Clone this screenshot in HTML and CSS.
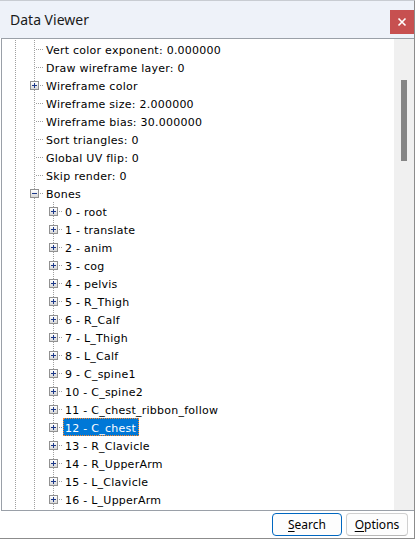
FILE: index.html
```html
<!DOCTYPE html>
<html>
<head>
<meta charset="utf-8">
<link rel="stylesheet" href="styles.css">
</head>
<body>
<div class="window">
  <div class="titlebar">
    <span class="title">Data Viewer</span>
    <button class="close" aria-label="Close"><svg width="10" height="10" viewBox="0 0 10 10"><path d="M1.5 1.5l7 7M8.5 1.5l-7 7" stroke="#fff" stroke-width="1.6" fill="none"/></svg></button>
  </div>
  <div class="tree">
    <div class="list">
      <div class="row"><span class="cell v"></span><span class="cell t"></span><span class="label">Vert color exponent: 0.000000</span></div>
      <div class="row"><span class="cell v"></span><span class="cell t"></span><span class="label">Draw wireframe layer: 0</span></div>
      <div class="row"><span class="cell v"></span><span class="cell t"><span class="exp plus"></span></span><span class="label">Wireframe color</span></div>
      <div class="row"><span class="cell v"></span><span class="cell t"></span><span class="label">Wireframe size: 2.000000</span></div>
      <div class="row"><span class="cell v"></span><span class="cell t"></span><span class="label">Wireframe bias: 30.000000</span></div>
      <div class="row"><span class="cell v"></span><span class="cell t"></span><span class="label">Sort triangles: 0</span></div>
      <div class="row"><span class="cell v"></span><span class="cell t"></span><span class="label">Global UV flip: 0</span></div>
      <div class="row"><span class="cell v"></span><span class="cell t"></span><span class="label">Skip render: 0</span></div>
      <div class="row"><span class="cell v"></span><span class="cell t"><span class="exp"></span></span><span class="label">Bones</span></div>
      <div class="row"><span class="cell v"></span><span class="cell v"></span><span class="cell t"><span class="exp plus"></span></span><span class="label">0 - root</span></div>
      <div class="row"><span class="cell v"></span><span class="cell v"></span><span class="cell t"><span class="exp plus"></span></span><span class="label">1 - translate</span></div>
      <div class="row"><span class="cell v"></span><span class="cell v"></span><span class="cell t"><span class="exp plus"></span></span><span class="label">2 - anim</span></div>
      <div class="row"><span class="cell v"></span><span class="cell v"></span><span class="cell t"><span class="exp plus"></span></span><span class="label">3 - cog</span></div>
      <div class="row"><span class="cell v"></span><span class="cell v"></span><span class="cell t"><span class="exp plus"></span></span><span class="label">4 - pelvis</span></div>
      <div class="row"><span class="cell v"></span><span class="cell v"></span><span class="cell t"><span class="exp plus"></span></span><span class="label">5 - R_Thigh</span></div>
      <div class="row"><span class="cell v"></span><span class="cell v"></span><span class="cell t"><span class="exp plus"></span></span><span class="label">6 - R_Calf</span></div>
      <div class="row"><span class="cell v"></span><span class="cell v"></span><span class="cell t"><span class="exp plus"></span></span><span class="label">7 - L_Thigh</span></div>
      <div class="row"><span class="cell v"></span><span class="cell v"></span><span class="cell t"><span class="exp plus"></span></span><span class="label">8 - L_Calf</span></div>
      <div class="row"><span class="cell v"></span><span class="cell v"></span><span class="cell t"><span class="exp plus"></span></span><span class="label">9 - C_spine1</span></div>
      <div class="row"><span class="cell v"></span><span class="cell v"></span><span class="cell t"><span class="exp plus"></span></span><span class="label">10 - C_spine2</span></div>
      <div class="row"><span class="cell v"></span><span class="cell v"></span><span class="cell t"><span class="exp plus"></span></span><span class="label">11 - C_chest_ribbon_follow</span></div>
      <div class="row"><span class="cell v"></span><span class="cell v"></span><span class="cell t"><span class="exp plus"></span></span><span class="label selected">12 - C_chest</span></div>
      <div class="row"><span class="cell v"></span><span class="cell v"></span><span class="cell t"><span class="exp plus"></span></span><span class="label">13 - R_Clavicle</span></div>
      <div class="row"><span class="cell v"></span><span class="cell v"></span><span class="cell t"><span class="exp plus"></span></span><span class="label">14 - R_UpperArm</span></div>
      <div class="row"><span class="cell v"></span><span class="cell v"></span><span class="cell t"><span class="exp plus"></span></span><span class="label">15 - L_Clavicle</span></div>
      <div class="row"><span class="cell v"></span><span class="cell v"></span><span class="cell t"><span class="exp plus"></span></span><span class="label">16 - L_UpperArm</span></div>
      <div class="row"><span class="cell v"></span><span class="cell v"></span><span class="cell v"></span></div>
    </div>
    <div class="scrollbar"><div class="thumb"></div></div>
  </div>
  <div class="footer">
    <button class="btn default"><u>S</u>earch</button>
    <button class="btn"><u>O</u>ptions</button>
  </div>
</div>
</body>
</html>
```
FILE: styles.css
```css
html, body {
  margin: 0;
  padding: 0;
  background: #ffffff;
}
.window {
  width: 415px;
  height: 539px;
  box-sizing: border-box;
  border-right: 1px solid #8c8c8c;
  border-bottom: 1px solid #8c8c8c;
  border-top: 1px solid #c8ccd2;
  display: flex;
  flex-direction: column;
  background: #ffffff;
}
.titlebar {
  height: 37px;
  flex: none;
  background: #eef2f9;
  display: flex;
  align-items: flex-start;
  justify-content: space-between;
}
.title {
  font-family: "Noto Sans", sans-serif;
  font-size: 14px;
  color: #1a1a1a;
  margin: 9px 0 0 10px;
  line-height: 20px;
}
.close {
  width: 24px;
  height: 24px;
  margin-top: 9px;
  padding: 0;
  border: none;
  background: #c75050;
  display: flex;
  align-items: center;
  justify-content: center;
}
.tree {
  flex: none;
  height: 473px;
  margin-left: 1px;
  box-sizing: border-box;
  border-top: 1px solid #9aa0a8;
  border-left: 1px solid #9aa0a8;
  border-bottom: 1px solid #9aa0a8;
  display: flex;
  overflow: hidden;
}
.list {
  flex: 1;
  padding: 1px 0 0 4px;
  overflow: hidden;
  font-family: "DejaVu Sans", sans-serif;
  font-size: 11px;
  letter-spacing: 0.25px;
  color: #000;
}
.row {
  display: flex;
  height: 18px;
}
.cell {
  width: 19px;
  height: 18px;
  flex: none;
  display: flex;
  justify-content: center;
  align-items: flex-start;
}
.v {
  background: repeating-linear-gradient(#a0a0a0 0 1px, transparent 1px 2px) 9px 0 / 1px 18px no-repeat;
}
.t {
  background:
    repeating-linear-gradient(#a0a0a0 0 1px, transparent 1px 2px) 9px 0 / 1px 18px no-repeat,
    repeating-linear-gradient(90deg, #a0a0a0 0 1px, transparent 1px 2px) 11px 9px / 8px 1px no-repeat;
}
.exp {
  width: 9px;
  height: 9px;
  margin-top: 5px;
  box-sizing: border-box;
  border: 1px solid #919191;
  background: linear-gradient(#ffffff, #d8d8d8);
  position: relative;
}
.exp::before {
  content: "";
  position: absolute;
  left: 1px;
  top: 3px;
  width: 5px;
  height: 1px;
  background: #1c3888;
}
.exp.plus::after {
  content: "";
  position: absolute;
  left: 3px;
  top: 1px;
  width: 1px;
  height: 5px;
  background: #1c3888;
}
.label {
  height: 18px;
  line-height: 14px;
  padding: 3px 2px 0 1px;
  border: 1px solid transparent;
  box-sizing: border-box;
  white-space: nowrap;
}
.label.selected {
  background: #0078d7;
  color: #ffffff;
  border: 1px dotted #ff8728;
}
.scrollbar {
  width: 20px;
  flex: none;
  background: #f0f0f0;
}
.thumb {
  width: 6px;
  height: 81px;
  margin: 41px 0 0 7px;
  background: #858585;
}
.footer {
  flex: 1;
  display: flex;
  justify-content: flex-end;
  align-items: flex-start;
  gap: 4px;
  padding: 2px 6px 0 0;
}
.btn {
  height: 23px;
  padding: 0;
  font-family: "Noto Sans", sans-serif;
  font-size: 12px;
  color: #000;
  background: #fdfdfd;
  border: 1px solid #d0d0d0;
  border-bottom-color: #b8b8b8;
  border-radius: 4px;
  width: 62px;
}
.btn.default {
  width: 70px;
  border: 1px solid #0067c0;
}
.btn u {
  text-underline-offset: 2px;
}
```
